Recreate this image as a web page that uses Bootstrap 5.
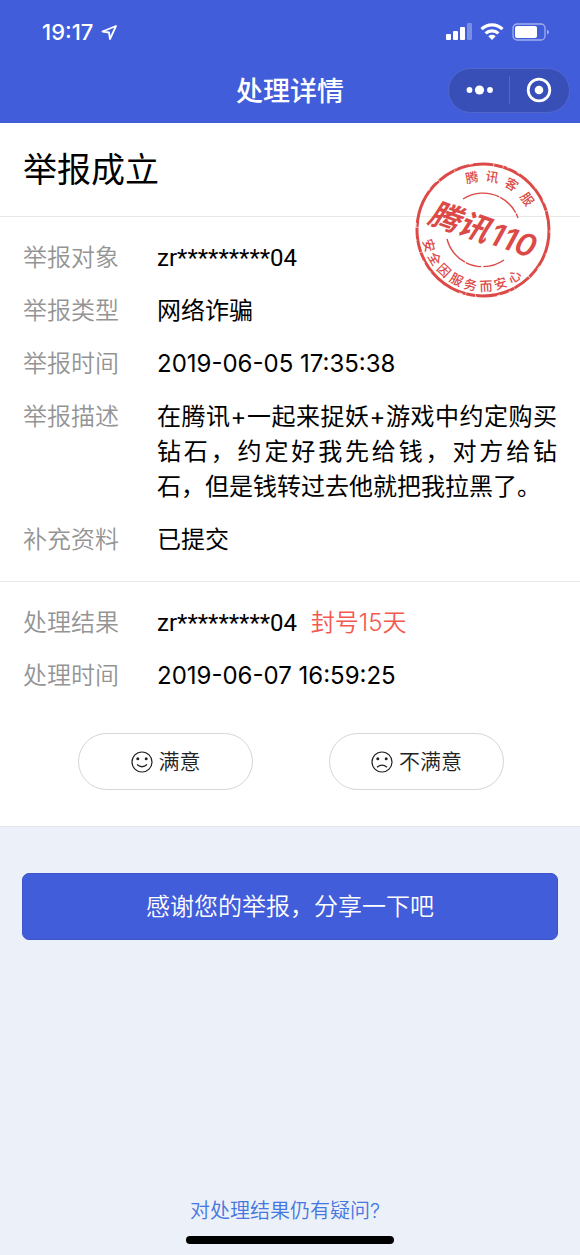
<!DOCTYPE html>
<html lang="zh-CN">
<head>
<meta charset="utf-8">
<meta name="viewport" content="width=device-width, initial-scale=1">
<title>处理详情</title>
<link href="https://cdn.jsdelivr.net/npm/bootstrap@5.3.0/dist/css/bootstrap.min.css" rel="stylesheet">
<style>
  body {
    font-family: Inter, "Noto Sans CJK SC", sans-serif;
    font-size: 24px;
    line-height: 35px;
    color: #000;
    background: #ecf0f8;
  }
  .top-area { background: #415dda; color: #fff; }
  .status-row { height: 57px; padding: 7px 30px 0 42px; }
  .status-time { font-size: 22px; font-weight: 500; }
  .status-icons { gap: 8px; }
  .title-row { height: 66px; padding-right: 10px; padding-left: 10px; }
  .title-row h1 { font-size: 27px; line-height: 40px; font-weight: 500; }
  .title-side { flex: 1 1 0; }
  .capsule { width: 122px; height: 45px; border: 1px solid #5267cc; border-radius: 23px; background: #394fb8; }
  .capsule button { border: 0; background: none; padding: 0; }
  .capsule-line { width: 1px; height: 28px; background: #5468c6; }
  .report { border-bottom: 1px solid #e2e5ea; }
  .report section + section { border-top: 1px solid #e8e8e8; }
  .verdict { padding: 23px 23px 22px; }
  .verdict h2 { font-size: 34px; line-height: 48px; font-weight: 400; }
  .facts { padding: 23px 23px 24px; row-gap: 18px; }
  .fact dt { flex: 0 0 134px; font-weight: 350; color: #949494; }
  .fact dd { text-align: justify; }
  .account { font-family: Roboto, sans-serif; line-height: 24px; }
  .penalty { color: #f4584f; font-weight: 350; margin-left: 7px; }
  .stamp { top: 38px; right: 28px; width: 138px; height: 138px; }
  .rating { gap: 76px; padding: 16px 22px 36px 24px; }
  .rating .btn { width: 175px; height: 57px; font-size: 21px; font-weight: 350; color: #222; border: 1px solid #d6d6d6; border-radius: 29px; gap: 6px; }
  .share-area { padding: 46px 22px; }
  .share-area .btn { height: 67px; font-size: 24px; font-weight: 350; color: #fff; background: #415dda; border: 1px solid #3c55c8; border-radius: 7px; }
  .doubt { font-size: 20px; line-height: 30px; font-weight: 350; color: #4477e0; margin-bottom: 10px; padding-right: 10px; }
  .home-bar { width: 208px; height: 8px; border-radius: 4px; background: #000; margin-bottom: 11px; }
</style>
</head>
<body>
<div class="min-vh-100 d-flex flex-column">
  <header class="top-area">
    <div class="status-row d-flex align-items-center">
      <span class="status-time">19:17</span>
      <svg class="ms-2" width="17" height="17" viewBox="0 0 17 17" fill="none" stroke="#fff" stroke-width="1.800" stroke-linejoin="round" aria-hidden="true"><path d="M15 2 1.500 7.500l6.500 1L9 15z"/></svg>
      <div class="status-icons ms-auto d-flex align-items-center">
        <svg width="27" height="18" viewBox="0 0 27 18" fill="#fff" aria-hidden="true"><rect x="1" y="11" width="5" height="6" rx="1"/><rect x="8" y="8" width="5" height="9" rx="1"/><rect x="15" y="4" width="5" height="13" rx="1"/><rect x="22" y="0" width="5" height="17" rx="1" opacity=".3"/></svg>
        <svg width="24" height="18" viewBox="0 0 24 18" aria-hidden="true"><g fill="none" stroke="#fff" stroke-width="3.200"><path d="M1.500 6.200a15 15 0 0 1 21 0"/><path d="M5.600 10.400a9.200 9.200 0 0 1 12.800 0"/></g><path d="M8.300 13.200a5.400 5.400 0 0 1 7.400 0L12 17z" fill="#fff"/></svg>
        <svg width="38" height="18" viewBox="0 0 38 18" aria-hidden="true"><rect x="1" y="1" width="32" height="16" rx="4" fill="none" stroke="#fff" stroke-opacity=".5" stroke-width="1.300"/><rect x="3" y="3" width="22" height="12" rx="2" fill="#fff"/><path d="M35 6.500q2 1 2 2.500t-2 2.500z" fill="#fff" fill-opacity=".5"/></svg>
      </div>
    </div>
    <div class="title-row d-flex align-items-center">
      <div class="title-side"></div>
      <h1 class="m-0 pt-1">处理详情</h1>
      <div class="title-side d-flex justify-content-end">
        <div class="capsule d-flex align-items-center">
          <button type="button" class="flex-fill d-flex justify-content-center" aria-label="更多"><svg width="28" height="28" viewBox="0 0 28 28" fill="#fff"><circle cx="4.500" cy="14" r="2.900"/><circle cx="14.500" cy="14" r="4.600"/><circle cx="25" cy="14" r="2.900"/></svg></button>
          <span class="capsule-line"></span>
          <button type="button" class="flex-fill d-flex justify-content-center" aria-label="关闭"><svg width="28" height="28" viewBox="0 0 28 28"><circle cx="14" cy="14" r="10.800" fill="none" stroke="#fff" stroke-width="2.800"/><circle cx="14" cy="14" r="4.300" fill="#fff"/></svg></button>
        </div>
      </div>
    </div>
  </header>

  <main class="flex-grow-1 d-flex flex-column">
    <div class="report bg-white position-relative">
      <section class="verdict"><h2 class="m-0">举报成立</h2></section>
      <section>
        <dl class="facts d-flex flex-column m-0">
          <div class="fact d-flex"><dt>举报对象</dt><dd class="m-0 flex-fill"><span class="account">zr*********04</span></dd></div>
          <div class="fact d-flex"><dt>举报类型</dt><dd class="m-0 flex-fill">网络诈骗</dd></div>
          <div class="fact d-flex"><dt>举报时间</dt><dd class="m-0 flex-fill">2019-06-05 17:35:38</dd></div>
          <div class="fact d-flex"><dt>举报描述</dt><dd class="m-0 flex-fill">在腾讯+一起来捉妖+游戏中约定购买钻石，约定好我先给钱，对方给钻石，但是钱转过去他就把我拉黑了。</dd></div>
          <div class="fact d-flex"><dt>补充资料</dt><dd class="m-0 flex-fill">已提交</dd></div>
        </dl>
      </section>
      <section>
        <dl class="facts d-flex flex-column m-0">
          <div class="fact d-flex"><dt>处理结果</dt><dd class="m-0 flex-fill"><span class="account">zr*********04</span> <span class="penalty">封号15天</span></dd></div>
          <div class="fact d-flex"><dt>处理时间</dt><dd class="m-0 flex-fill">2019-06-07 16:59:25</dd></div>
        </dl>
        <div class="rating d-flex justify-content-center">
          <button type="button" class="btn d-flex align-items-center justify-content-center"><svg width="22" height="22" viewBox="0 0 22 22" fill="none" stroke="#222" stroke-width="1.200" aria-hidden="true"><circle cx="11" cy="11" r="10"/><path d="M6 13.500q5 4.500 10 0"/><g fill="#222" stroke="none"><circle cx="6.800" cy="7.800" r="1.500"/><circle cx="15.200" cy="7.800" r="1.500"/></g></svg>满意</button>
          <button type="button" class="btn d-flex align-items-center justify-content-center"><svg width="22" height="22" viewBox="0 0 22 22" fill="none" stroke="#222" stroke-width="1.200" aria-hidden="true"><circle cx="11" cy="11" r="10"/><path d="M6 16.300q5-4.500 10 0"/><g fill="#222" stroke="none"><circle cx="6.800" cy="7.800" r="1.500"/><circle cx="15.200" cy="7.800" r="1.500"/></g></svg>不满意</button>
        </div>
      </section>
      <svg class="stamp position-absolute" viewBox="-69 -69 138 138" fill="#dc4a47" font-family="'Noto Sans CJK SC', sans-serif" text-anchor="middle" role="img" aria-label="腾讯110 印章">
        <circle r="66" fill="none" stroke="#dc4a47" stroke-width="3" stroke-dasharray="52 .6 18 .4 40 .6 9 .5 63 .5 25 .6"/>
        <circle r="67.200" fill="none" stroke="#fff" stroke-width="1" stroke-dasharray="3 21 1 13 4 35 2 9"/>
        <g fill="none" stroke="#dc4a47" stroke-width="1.400"><path d="M-20-31A37 37 0 0 1 35-12" stroke-dasharray="38 1 22 1"/><path d="M-36 9A37 37 0 0 0 21 30" stroke-dasharray="30 1 16 2"/></g>
        <g font-size="13" font-weight="500">
          <text y="-49" transform="rotate(-12)">腾</text><text y="-49" transform="rotate(10)">讯</text><text y="-49" transform="rotate(32)">客</text><text y="-49" transform="rotate(55)">服</text>
          <text y="61" transform="rotate(74)">安</text><text y="61" transform="rotate(59)">全</text><text y="61" transform="rotate(44)">因</text><text y="61" transform="rotate(28)">服</text><text y="61" transform="rotate(13)">务</text><text y="61" transform="rotate(-3)">而</text><text y="61" transform="rotate(-18)">安</text><text y="61" transform="rotate(-34)">心</text>
        </g>
        <g transform="rotate(19)" font-style="italic"><text x="-25" y="11" font-size="31" font-weight="700">腾讯</text><text x="32" y="11" font-size="31" font-weight="600" font-family="Inter, sans-serif">110</text></g>
      </svg>
    </div>
    <div class="share-area"><button type="button" class="btn w-100">感谢您的举报，分享一下吧</button></div>
  </main>

  <footer class="d-flex flex-column align-items-center">
    <a href="#" class="doubt text-decoration-none">对处理结果仍有疑问?</a>
    <div class="home-bar"></div>
  </footer>
</div>
<script src="https://cdn.jsdelivr.net/npm/bootstrap@5.3.0/dist/js/bootstrap.bundle.min.js"></script>
</body>
</html>
